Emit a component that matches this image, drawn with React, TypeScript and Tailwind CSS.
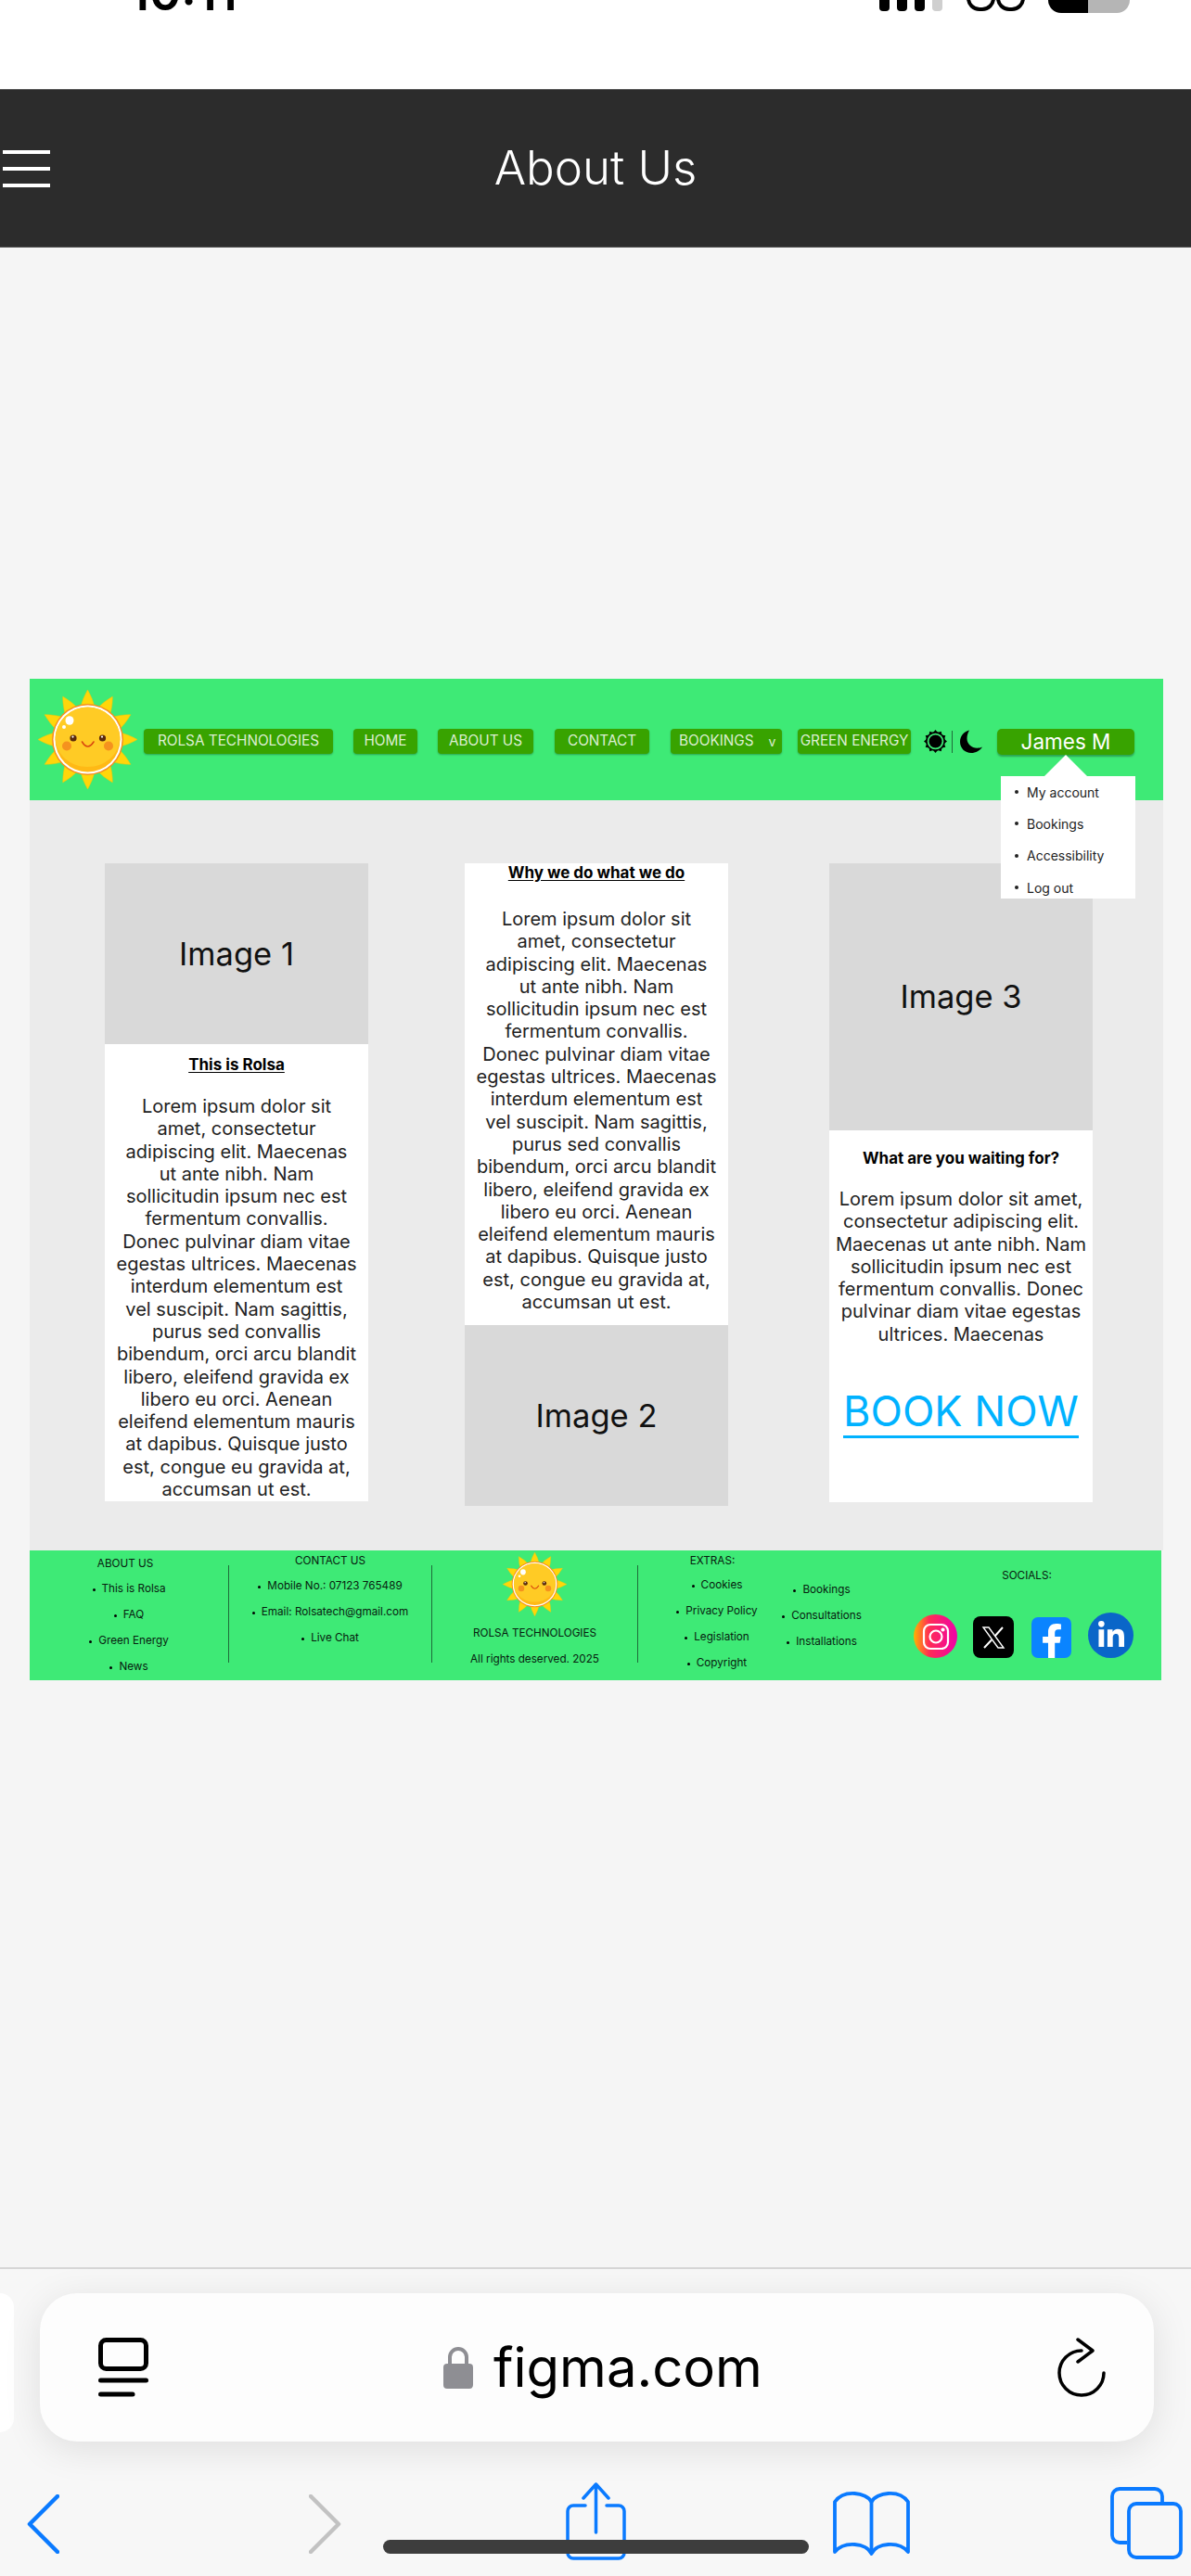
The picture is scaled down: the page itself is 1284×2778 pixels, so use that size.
import { FaFacebookF, FaLinkedinIn } from 'react-icons/fa'

const lorem1 = "Lorem ipsum dolor sit amet, consectetur adipiscing elit. Maecenas ut ante nibh. Nam sollicitudin ipsum nec est fermentum convallis. Donec pulvinar diam vitae egestas ultrices. Maecenas interdum elementum est vel suscipit. Nam sagittis, purus sed convallis bibendum, orci arcu blandit libero, eleifend gravida ex libero eu orci. Aenean eleifend elementum mauris at dapibus. Quisque justo est, congue eu gravida at, accumsan ut est."
const lorem3 = "Lorem ipsum dolor sit amet, consectetur adipiscing elit. Maecenas ut ante nibh. Nam sollicitudin ipsum nec est fermentum convallis. Donec pulvinar diam vitae egestas ultrices. Maecenas"

const Sun = ({ size }: { size: number }) => {
    const petals = Array.from({ length: 12 }, (_, i) => i * 30)
    return (
        <svg width={size} height={size} viewBox="0 0 107 107">
            {petals.map((a) => (
                <path key={a} d="M45 22 Q48 9 53.5 0 Q59 9 62 22 Z" fill="#ffd60a" stroke="#f7c600" strokeWidth="0.5" transform={`rotate(${a} 53.5 53.5)`} />
            ))}
            <circle cx="53.5" cy="53.5" r="38.5" fill="#f58f1e" />
            <circle cx="53.5" cy="53.5" r="37" fill="#fff" />
            <circle cx="53.5" cy="53.5" r="35" fill="#ffb915" />
            <path d="M18.6 51 A35 35 0 0 1 88.4 51 C88 70 72 83 53.5 83 C35 83 19 70 18.6 51 Z" fill="#ffcb25" />
            <ellipse cx="34" cy="33" rx="4.5" ry="4.8" fill="#fff" />
            <circle cx="28" cy="40" r="2" fill="#fff" />
            <circle cx="38" cy="52" r="3.6" fill="#5a2a0c" />
            <circle cx="69.5" cy="52" r="3.6" fill="#5a2a0c" />
            <circle cx="37.5" cy="50.6" r="1.1" fill="#fff" />
            <circle cx="69" cy="50.6" r="1.1" fill="#fff" />
            <circle cx="31" cy="60.5" r="5" fill="#f5921e" />
            <circle cx="76" cy="60.5" r="5" fill="#f5921e" />
            <path d="M47.5 56 Q53.5 66 60 56" fill="none" stroke="#d9480f" strokeWidth="1.6" strokeLinecap="round" />
        </svg>
    )
}

const NavButton = ({ label, width, ml }: { label: string; width: string; ml: string }) => (
    <div className={`${width} ${ml} mt-[4px] h-[27px] flex items-center justify-center bg-[#38a300] rounded-[4px] text-[15.3px] text-[#dcefd2] shadow-[0_1px_2px_rgba(0,0,0,0.3)] whitespace-nowrap`}>
        {label}
    </div>
)

const FooterItem = ({ label }: { label: string }) => (
    <div className="h-[28px] flex items-center justify-center gap-[7px] whitespace-nowrap">
        <span className="w-[3px] h-[3px] rounded-full bg-black"></span>
        <span>{label}</span>
    </div>
)

const MenuItem = ({ label }: { label: string }) => (
    <div className="h-[34.3px] flex items-center gap-[9px] pl-[15px]">
        <span className="w-[4px] h-[4px] rounded-full bg-[#222]"></span>
        <span>{label}</span>
    </div>
)

const FooterDivider = () => <div className="w-px h-[105px] mt-[16px] bg-[#1f6b3a]"></div>

const App = () => {
    return (
        <div className="relative w-[1284px] h-[2778px] overflow-hidden bg-[#f5f5f5] font-['Inter',sans-serif]">
            {/* status bar, cut off by the top of the screenshot */}
            <div className="h-[96px] bg-white overflow-hidden flex items-start">
                <div className="ml-[139px] w-[123px] -mt-[37px] text-[52px] leading-[60px] font-semibold text-black whitespace-nowrap">10:11</div>
                <div className="ml-[686px] flex items-end gap-[8px] h-[12px]">
                    <span className="w-[11px] h-[12px] bg-black rounded-b-[4px]"></span>
                    <span className="w-[11px] h-[12px] bg-black rounded-b-[4px]"></span>
                    <span className="w-[11px] h-[12px] bg-black rounded-b-[4px]"></span>
                    <span className="w-[11px] h-[12px] bg-[#cfcfcf] rounded-b-[4px]"></span>
                </div>
                <div className="ml-[26px] flex gap-[1px] -mt-[16px]">
                    <span className="w-[31px] h-[28px] border-[4px] border-black rounded-full"></span>
                    <span className="w-[31px] h-[28px] border-[4px] border-black rounded-full"></span>
                </div>
                <div className="ml-[25px] flex w-[88px] h-[14px]">
                    <span className="w-[43px] bg-black rounded-bl-[14px]"></span>
                    <span className="w-[45px] bg-[#b5b5b5] rounded-br-[14px]"></span>
                </div>
            </div>

            {/* figma title bar */}
            <div className="h-[171px] bg-[#2c2c2c] border-y border-y-[#555] grid grid-cols-[1fr_auto_1fr] items-center">
                <div className="flex flex-col gap-[14px] ml-[3px] w-[51px]">
                    <span className="h-[4px] bg-white"></span>
                    <span className="h-[4px] bg-white"></span>
                    <span className="h-[4px] bg-white"></span>
                </div>
                <div className="text-[51px] font-light text-white">About Us</div>
                <div></div>
            </div>

            {/* prototype frame */}
            <div className="ml-[32px] mt-[465px] w-[1222px]">
                <div className="relative h-[131px] bg-[#3eea76] flex items-center">
                    <div className="ml-[9px]"><Sun size={107} /></div>
                    <NavButton label="ROLSA TECHNOLOGIES" width="w-[204px]" ml="ml-[7px]" />
                    <NavButton label="HOME" width="w-[69px]" ml="ml-[22px]" />
                    <NavButton label="ABOUT US" width="w-[103px]" ml="ml-[22px]" />
                    <NavButton label="CONTACT" width="w-[102px]" ml="ml-[23px]" />
                    <div className="ml-[23px] mt-[4px] w-[120px] h-[27px] flex items-center bg-[#38a300] rounded-[4px] text-[15.3px] text-[#dcefd2] shadow-[0_1px_2px_rgba(0,0,0,0.3)] pl-[9px] whitespace-nowrap">
                        BOOKINGS<span className="ml-[16px] text-[14px]">v</span>
                    </div>
                    <NavButton label="GREEN ENERGY" width="w-[122px]" ml="ml-[17px]" />
                    <svg className="ml-[14px] mt-[4px]" width="25" height="25" viewBox="0 0 25 25">
                        {Array.from({ length: 12 }, (_, i) => i * 30).map((a) => (
                            <path key={a} d="M10 3 L12.5 0 L15 3 Z" fill="#000" transform={`rotate(${a} 12.5 12.5)`} />
                        ))}
                        <circle cx="12.5" cy="12.5" r="9.6" fill="none" stroke="#000" strokeWidth="1.6" />
                        <circle cx="12.5" cy="12.5" r="7" fill="#000" />
                    </svg>
                    <div className="ml-[5px] mt-[4px] w-px h-[24px] bg-[#1f6b3a]"></div>
                    <svg className="ml-[7px] mt-[4px]" width="25" height="25" viewBox="0 0 25 25">
                        <path d="M11 0.5 C5 2 1 7 1 13 C1 20 6.5 25 13 25 C18 25 22.5 22.5 25 18.5 C23.5 19.3 21.5 19.7 19.5 19.7 C13.5 19.7 8.5 15.5 8.5 9.5 C8.5 6 9.5 3 11 0.5 Z" fill="#000" />
                    </svg>
                    <div className="ml-[16px] mt-[4px] w-[148px] h-[28px] flex items-center justify-center bg-[#38a300] rounded-[5px] text-[22.5px] text-white shadow-[0_2px_2px_rgba(0,0,0,0.3)]">
                        James M
                    </div>

                    {/* account dropdown */}
                    <div className="absolute left-[1047px] top-[82px] w-[145px]">
                        <div className="ml-[47px] w-0 h-0 border-x-[23px] border-x-transparent border-b-[23px] border-b-white"></div>
                        <div className="h-[132px] bg-white text-[14px] text-[#222]">
                            <MenuItem label="My account" />
                            <MenuItem label="Bookings" />
                            <MenuItem label="Accessibility" />
                            <MenuItem label="Log out" />
                        </div>
                    </div>
                </div>

                <div className="h-[809px] bg-[#ebebeb] flex items-start pt-[68px] pl-[81px]">
                    {/* column 1 */}
                    <div className="w-[284px] flex flex-col">
                        <div className="h-[195px] bg-[#d9d9d9] flex items-center justify-center text-[34.5px] text-[#111]">Image 1</div>
                        <div className="h-[493px] bg-white text-center text-[#222] px-[12px] pt-[12px]">
                            <div className="text-[17px] leading-[20px] font-bold underline underline-offset-2 text-black">This is Rolsa</div>
                            <p className="mt-[23px] text-[20px] leading-[24.3px]">{lorem1}</p>
                        </div>
                    </div>

                    {/* column 2 */}
                    <div className="ml-[104px] w-[284px] flex flex-col">
                        <div className="h-[498px] bg-white text-center text-[#222] px-[12px]">
                            <div className="text-[17px] leading-[20px] font-bold underline underline-offset-2 text-black">Why we do what we do</div>
                            <p className="mt-[28px] text-[20px] leading-[24.3px]">{lorem1}</p>
                        </div>
                        <div className="h-[195px] bg-[#d9d9d9] flex items-center justify-center text-[34.5px] text-[#111]">Image 2</div>
                    </div>

                    {/* column 3 */}
                    <div className="ml-[109px] w-[284px] flex flex-col">
                        <div className="h-[288px] bg-[#d9d9d9] flex items-center justify-center text-[34.5px] text-[#111]">Image 3</div>
                        <div className="h-[401px] bg-white text-center text-[#222] px-[5px] pt-[20px]">
                            <div className="text-[17px] leading-[20px] font-bold text-black">What are you waiting for?</div>
                            <p className="mt-[22px] text-[20px] leading-[24.3px]">{lorem3}</p>
                            <div className="mt-[45px] mx-[10px] border-b-[3px] border-b-[#00b2ff] text-[45px] leading-[52px] text-[#00b2ff] whitespace-nowrap flex justify-center">BOOK NOW</div>
                        </div>
                    </div>
                </div>

                <div className="w-[1220px] h-[140px] bg-[#3eea76] flex items-start text-[11.7px] text-[#07200f]">
                    <div className="w-[214px] pt-[5px] text-center">
                        <div className="h-[18px] leading-[18px] pr-[8px]">ABOUT US</div>
                        <div className="mt-[5px]">
                            <FooterItem label="This is Rolsa" />
                            <FooterItem label="FAQ" />
                            <FooterItem label="Green Energy" />
                            <FooterItem label="News" />
                        </div>
                    </div>
                    <FooterDivider />
                    <div className="w-[218px] pt-[2px] text-center">
                        <div className="h-[18px] leading-[18px]">CONTACT US</div>
                        <div className="mt-[5px]">
                            <FooterItem label="Mobile No.: 07123 765489" />
                            <FooterItem label="Email: Rolsatech@gmail.com" />
                            <FooterItem label="Live Chat" />
                        </div>
                    </div>
                    <FooterDivider />
                    <div className="w-[221px] pt-[2px] flex flex-col items-center">
                        <Sun size={69} />
                        <div className="mt-[4px] h-[28px] leading-[28px]">ROLSA TECHNOLOGIES</div>
                        <div className="h-[28px] leading-[28px]">All rights deserved. 2025</div>
                    </div>
                    <FooterDivider />
                    <div className="ml-[15px] w-[140px] pt-[2px] text-center">
                        <div className="h-[18px] leading-[18px] pr-[10px]">EXTRAS:</div>
                        <div className="mt-[4px]">
                            <FooterItem label="Cookies" />
                            <FooterItem label="Privacy Policy" />
                            <FooterItem label="Legislation" />
                            <FooterItem label="Copyright" />
                        </div>
                    </div>
                    <div className="w-[86px] pt-[29px]">
                        <FooterItem label="Bookings" />
                        <FooterItem label="Consultations" />
                        <FooterItem label="Installations" />
                    </div>
                    <div className="ml-[56px] w-[238px] pt-[18px] flex flex-col">
                        <div className="h-[18px] leading-[18px] text-center pl-[6px]">SOCIALS:</div>
                        <div className="mt-[31px] flex items-end">
                            <div className="w-[47px] h-[47px] rounded-full bg-[linear-gradient(90deg,#ffb300,#ff2d55_35%,#f000a8)] flex items-center justify-center">
                                <svg width="30" height="30" viewBox="0 0 30 30" fill="none" stroke="#fff" strokeWidth="2.2">
                                    <rect x="2" y="2" width="26" height="26" rx="7" />
                                    <circle cx="15" cy="15" r="6.5" />
                                    <circle cx="22.5" cy="7.5" r="1" fill="#fff" />
                                </svg>
                            </div>
                            <div className="ml-[17px] w-[44px] h-[45px] rounded-[8px] bg-black flex items-center justify-center">
                                <svg width="28" height="28" viewBox="0 0 28 28" fill="none" stroke="#fff" strokeWidth="1.4">
                                    <path d="M3 3 H9 L25 25 H19 Z" />
                                    <path d="M24 3 L15.5 12.5 M12 16.5 L4 25" strokeWidth="2" />
                                </svg>
                            </div>
                            <div className="ml-[19px] w-[43px] h-[44px] rounded-[7px] bg-[#0a84ff] flex items-end justify-center overflow-hidden">
                                <FaFacebookF className="w-[34px] h-[37px] text-white" />
                            </div>
                            <div className="ml-[18px] w-[49px] h-[49px] rounded-full bg-[#0a66c8] flex items-center justify-center">
                                <FaLinkedinIn className="w-[32px] h-[32px] text-white" />
                            </div>
                        </div>
                    </div>
                </div>
            </div>

            {/* safari toolbar */}
            <div className="absolute left-0 bottom-0 w-full h-[333px] bg-[#f7f7f7] border-t-2 border-t-[#d6d6d6]">
                <div className="flex items-start pt-[26px]">
                    <div className="w-[15px] h-[150px] bg-white rounded-r-[30px]"></div>
                    <div className="ml-[28px] w-[1201px] h-[160px] bg-[#fdfdfd] rounded-[40px] shadow-[0_8px_40px_rgba(0,0,0,0.1)] flex items-center">
                        <svg className="ml-[63px]" width="54" height="64" viewBox="0 0 54 64" fill="none" stroke="#000" strokeWidth="5">
                            <rect x="2.5" y="2.5" width="49" height="31" rx="6" />
                            <path d="M2.5 46 H51.5" strokeLinecap="round" />
                            <path d="M2.5 61 H37" strokeLinecap="round" />
                        </svg>
                        <svg className="ml-[318px]" width="32" height="46" viewBox="0 0 32 46">
                            <path d="M7 20 V12 a9 9 0 0 1 18 0 V20" fill="none" stroke="#8e8e93" strokeWidth="4" />
                            <rect x="0" y="19" width="32" height="27" rx="4" fill="#8e8e93" />
                        </svg>
                        <div className="ml-[22px] w-[283px] text-[58px] leading-none text-black whitespace-nowrap">figma.com</div>
                        <svg className="ml-[325px]" width="52" height="64" viewBox="0 0 52 64" fill="none" stroke="#000" strokeWidth="3.5" strokeLinecap="round" strokeLinejoin="round">
                            <path d="M26 14 A24 24 0 1 0 50 38" />
                            <path d="M22 2 L38 14 L22 26" />
                        </svg>
                    </div>
                </div>
                <div className="mt-[44px] flex items-center h-[84px]">
                    <svg className="ml-[29px] mt-[5px]" width="35" height="64" viewBox="0 0 35 64" fill="none" stroke="#0a7aff" strokeWidth="4.5" strokeLinecap="round" strokeLinejoin="round">
                        <path d="M33 2 L3 32 L33 62" />
                    </svg>
                    <svg className="ml-[269px] mt-[5px]" width="35" height="64" viewBox="0 0 35 64" fill="none" stroke="#c2c2c2" strokeWidth="4.5" strokeLinecap="round" strokeLinejoin="round">
                        <path d="M2 2 L32 32 L2 62" />
                    </svg>
                    <svg className="ml-[242px]" width="65" height="84" viewBox="0 0 65 84" fill="none" stroke="#0a7aff" strokeWidth="3.5" strokeLinecap="round" strokeLinejoin="round">
                        <path d="M21 25 H8 a6 6 0 0 0 -6 6 V76 a6 6 0 0 0 6 6 H57 a6 6 0 0 0 6 -6 V31 a6 6 0 0 0 -6 -6 H44" />
                        <path d="M32.5 54 V2 M19 17 L32.5 2 L46 17" />
                    </svg>
                    <svg className="ml-[223px] mt-[4px]" width="83" height="70" viewBox="0 0 83 70" fill="none" stroke="#0a7aff" strokeWidth="3.8" strokeLinejoin="round">
                        <path d="M41.5 12 C36 2 12 -2 2 12 V66 C12 54 36 56 41.5 68 C47 56 71 54 81 66 V12 C71 -2 47 2 41.5 12 Z" />
                        <path d="M41.5 12 V68" />
                    </svg>
                    <svg className="ml-[216px] mt-[4px]" width="78" height="78" viewBox="0 0 78 78" fill="none" stroke="#0a7aff" strokeWidth="3.8">
                        <path d="M18 60 H10 a8 8 0 0 1 -8 -8 V10 a8 8 0 0 1 8 -8 H48 a8 8 0 0 1 8 8 V18" />
                        <rect x="20" y="18" width="56" height="58" rx="8" />
                    </svg>
                </div>
                <div className="absolute left-[413px] top-[292px] w-[459px] h-[15px] rounded-full bg-[#3d3d3d]"></div>
            </div>
        </div>
    )
}

export default App
